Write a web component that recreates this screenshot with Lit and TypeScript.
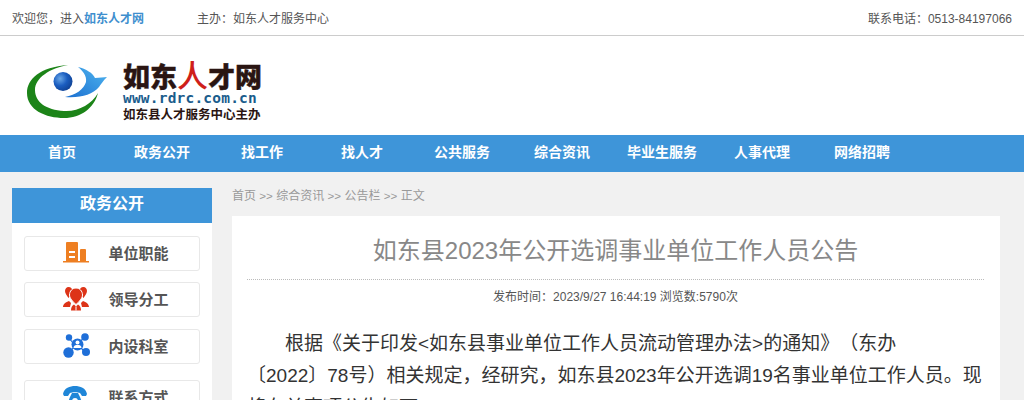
import { LitElement, html, css } from "lit";
import { customElement } from "lit/decorators.js";

const NAV = ["首页", "政务公开", "找工作", "找人才", "公共服务", "综合资讯", "毕业生服务", "人事代理", "网络招聘"];

const icons = {
  building: html`<svg width="26" height="22" viewBox="0 0 26 22"><path fill="#ee7f22" d="M3 1a1 1 0 0 1 1-1h10a1 1 0 0 1 1 1v18H3zM17 8a1 1 0 0 1 1-1h4a1 1 0 0 1 1 1v11h-6zM0 19h26v1.500H0z"/><path fill="#fff" d="M6 9h6v2H6zM6 14h6v2H6z"/></svg>`,
  people: html`<svg width="26" height="24" viewBox="0 0 26 24"><g fill="#dd3418"><path d="M5.500 0C8 0 9.500 2 9.500 4S7 9 5.500 11C4 9 2 6 2 4s1.500-4 3.500-4zM20.500 0C22.500 0 24 2 24 4s-2 5-3.500 7C19 9 16.500 6 16.500 4s1.500-4 4-4z"/><path stroke="#fff" stroke-width="1" d="M13 1c3.500 0 6.500 3 6.500 7 0 3-3.500 7-6.500 9.500C10 15 6.500 11 6.500 8c0-4 3-7 6.500-7z"/><path d="M0 20c0-3 3-5 6-6l2 2-1 4zM26 20c0-3-3-5-6-6l-2 2 1 4z"/><path d="M8 23.500c0-3 1-5 3-6l2 2 2-2c2 1 3 3 3 6z"/></g><path stroke="#fff" stroke-width="1" d="M13 19.500v4"/></svg>`,
  network: html`<svg width="28" height="25" viewBox="0 0 28 25"><g stroke="#1f6fd8" stroke-width="1.200"><path d="M6 5L10 10M21 4L17 9M7 19L10 15M22 19L18 15"/></g><g fill="#1f6fd8"><circle cx="6" cy="4.500" r="3.200"/><circle cx="22" cy="4" r="3.800"/><circle cx="5.500" cy="19.500" r="5.200"/><circle cx="23" cy="19" r="4"/><circle cx="14.500" cy="11.500" r="6"/></g><circle cx="14.500" cy="9.500" r="2" fill="#fff"/><path fill="#fff" d="M10.500 15c0-2.500 2-3 4-3s4 .5 4 3z"/></svg>`,
  phone: html`<svg width="24" height="24" viewBox="0 0 24 24"><path fill="#1f86d8" d="M0 9C1 3 7 1 12 1s11 2 12 8l-1 2h-4l-2-3c-2-1-8-1-10 0l-2 3H1z"/><path fill="#1f86d8" d="M7 12l2-4h6l2 4 3 8v3H4v-3z"/><circle cx="12" cy="16" r="3" fill="#fff"/></svg>`,
};

@customElement("app-root")
export class AppRoot extends LitElement {
  static styles = css`
    :host {
      display: block;
      height: 400px;
      overflow: hidden;
      background: #f1f1f1;
      font-family: "Liberation Sans", "Noto Sans CJK SC", sans-serif;
      color: #555;
    }
    .top {
      height: 35px;
      border-bottom: 1px solid #ccc;
      background: #fff;
      display: flex;
      align-items: center;
      padding: 0 12px;
      font-size: 12px;
      color: #555;
    }
    .top b { color: #3f8fce; }
    .host-name { margin-left: 53px; }
    .phone { margin-left: auto; }
    .head {
      box-sizing: border-box;
      height: 99px;
      background: #fff;
      display: flex;
      align-items: flex-start;
      padding: 28px 0 0 26px;
    }
    .logo-text { margin: -1px 0 0 15px; display: flex; flex-direction: column; color: #2a1512; }
    .l1 { font-size: 27px; line-height: 28px; height: 28px; font-weight: 900; white-space: nowrap; -webkit-text-stroke: 0.4px #2a1512; }
    .l1 i { font-style: normal; color: #cf1f1a; font-weight: 500; font-size: 31px; line-height: 28px; -webkit-text-stroke: 0; }
    .l2 { font-family: "DejaVu Sans Mono", monospace; font-size: 14.500px; line-height: 15px; font-weight: 700; color: #1a5c8c; letter-spacing: 0.200px; white-space: nowrap; }
    .l3 { font-size: 12.500px; line-height: 18px; font-weight: 700; white-space: nowrap; }
    nav {
      height: 37px;
      background: #3e95d9;
      display: flex;
      padding-left: 12px;
    }
    nav a {
      width: 100px;
      text-align: center;
      color: #fff;
      font-size: 14px;
      font-weight: 700;
      line-height: 34px;
    }
    .body { display: flex; gap: 20px; padding: 16px 24px 0 12px; align-items: flex-start; }
    aside { width: 200px; flex: none; background: #fff; }
    aside h2 {
      margin: 0;
      height: 35px;
      background: #3e95d9;
      color: #fff;
      font-size: 16px;
      line-height: 31px;
      text-align: center;
      font-weight: 700;
    }
    .list { padding: 13px 12px 0; display: flex; flex-direction: column; }
    .item {
      box-sizing: border-box;
      height: 35px;
      border: 1px solid #e8e8e8;
      border-radius: 3px;
      display: flex;
      align-items: center;
      font-size: 15px;
      font-weight: 700;
      color: #555;
      margin-bottom: 11px;
      padding: 0 0 2px 38px;
    }
    .item:nth-child(2) { margin-bottom: 12px; }
    .item:nth-child(3) { margin-bottom: 16px; }
    .ic { width: 45.500px; flex: none; display: flex; }
    main { flex: 1; min-width: 0; }
    .crumb { font-size: 12px; line-height: 14px; color: #999; height: 27px; padding-top: 1px; }
    .crumb span { font-size: 11.600px; }
    .card { background: #fff; padding: 0 16px 0 15px; height: 300px; }
    h1 {
      margin: 0;
      height: 63px;
      border-bottom: 1px dotted #bbb;
      font-size: 24px;
      font-weight: 400;
      line-height: 70px;
      color: #888;
      text-align: center;
    }
    .meta { font-size: 12px; line-height: 14px; margin-top: 10px; text-align: center; color: #555; }
    .content {
      margin: 24px 0 0;
      font-size: 19px;
      line-height: 32px;
      color: #333;
      text-indent: 2em;
      text-spacing-trim: space-all;
    }
    .nb { white-space: nowrap; }
  `;

  render() {
    const side: [string, any][] = [
      ["单位职能", icons.building],
      ["领导分工", icons.people],
      ["内设科室", icons.network],
      ["联系方式", icons.phone],
    ];
    return html`
      <div class="top">
        <span>欢迎您，进入<b>如东人才网</b></span>
        <span class="host-name">主办：如东人才服务中心</span>
        <span class="phone">联系电话：0513-84197066</span>
      </div>
      <div class="head">
        <svg width="82" height="55" viewBox="0 0 82 55">
          <defs>
            <radialGradient id="ball" cx="0.35" cy="0.35" r="0.75">
              <stop offset="0" stop-color="#6aa7e6" />
              <stop offset="0.5" stop-color="#1a5dc0" />
              <stop offset="1" stop-color="#0f3f8f" />
            </radialGradient>
            <linearGradient id="bird" x1="0" y1="1" x2="1" y2="0">
              <stop offset="0" stop-color="#1b6fd0" />
              <stop offset="1" stop-color="#4fb6f0" />
            </linearGradient>
          </defs>
          <path fill="#1c8418" d="M42 1C14 3 1 15 1 29c0 17 19 25 37 25 17 0 30-10 34-25-6 11-20 19-34 18C20 46 9 38 9 26 9 14 24 4 42 1z" />
          <circle cx="37" cy="17.500" r="9.500" fill="url(#ball)" />
          <path fill="url(#bird)" d="M52 3c8 2 15 6 17 11 4 0 9-1 12-1-4 4-6 7-8 10-7 8-18 11-34 10 11-2 19-8 21-15 1-6-3-11-8-15z" />
        </svg>
        <div class="logo-text">
          <div class="l1">如东<i>人</i>才网</div>
          <div class="l2">www.rdrc.com.cn</div>
          <div class="l3">如东县人才服务中心主办</div>
        </div>
      </div>
      <nav>${NAV.map((n) => html`<a>${n}</a>`)}</nav>
      <div class="body">
        <aside>
          <h2>政务公开</h2>
          <div class="list">
            ${side.map(([t, ic]) => html`<div class="item"><span class="ic">${ic}</span>${t}</div>`)}
          </div>
        </aside>
        <main>
          <div class="crumb">首页 <span>&gt;&gt;</span> 综合资讯 <span>&gt;&gt;</span> 公告栏 <span>&gt;&gt;</span> 正文</div>
          <div class="card">
            <h1>如东县2023年公开选调事业单位工作人员公告</h1>
            <div class="meta">发布时间：2023/9/27 16:44:19 浏览数:5790次</div>
            <p class="content">根据《关于印发&lt;如东县事业单位工作人员流动管理办法&gt;的通知》（东办<span class="nb">〔2022〕78号）</span>相关规定，经研究，如东县2023年公开选调19名事业单位工作人员。现将有关事项公告如下：</p>
          </div>
        </main>
      </div>
    `;
  }
}
